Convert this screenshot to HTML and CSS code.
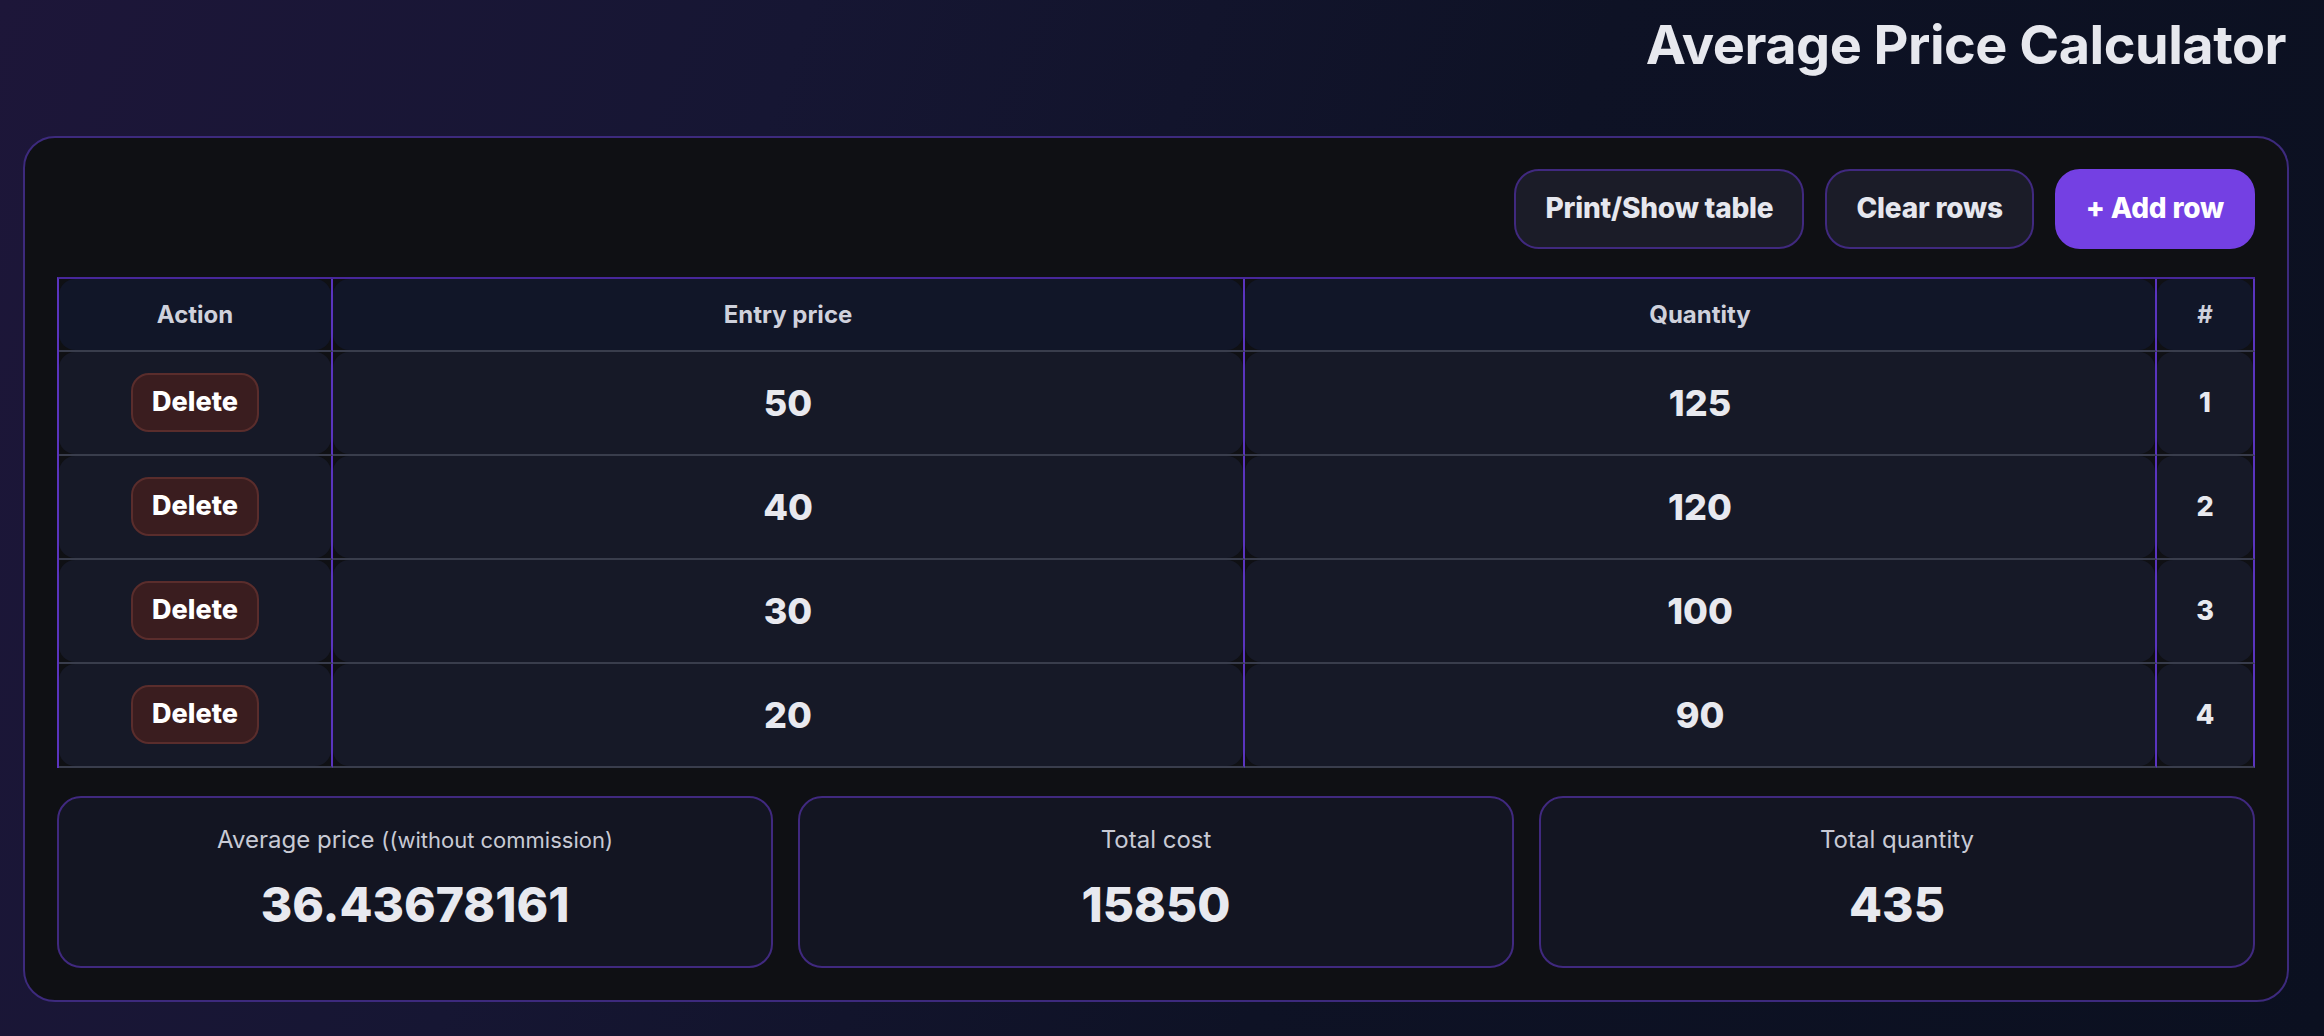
FILE: index.html
```html
<!DOCTYPE html>
<html lang="en">
<head>
<meta charset="utf-8">
<title>Average Price Calculator</title>
<link rel="stylesheet" href="styles.css">
</head>
<body>
<div class="page">
  <h1 class="title">Average Price Calculator</h1>
  <main class="panel">
    <div class="toolbar">
      <button class="btn btn-ghost">Print/Show table</button>
      <button class="btn btn-ghost">Clear rows</button>
      <button class="btn btn-primary">+ Add row</button>
    </div>
    <div class="table">
      <div class="cell head"><div class="fill">Action</div></div>
      <div class="cell head"><div class="fill">Entry price</div></div>
      <div class="cell head"><div class="fill">Quantity</div></div>
      <div class="cell head"><div class="fill">#</div></div>

      <div class="cell"><div class="fill"><button class="del">Delete</button></div></div>
      <div class="cell"><div class="fill num">50</div></div>
      <div class="cell"><div class="fill num">125</div></div>
      <div class="cell"><div class="fill idx">1</div></div>

      <div class="cell"><div class="fill"><button class="del">Delete</button></div></div>
      <div class="cell"><div class="fill num">40</div></div>
      <div class="cell"><div class="fill num">120</div></div>
      <div class="cell"><div class="fill idx">2</div></div>

      <div class="cell"><div class="fill"><button class="del">Delete</button></div></div>
      <div class="cell"><div class="fill num">30</div></div>
      <div class="cell"><div class="fill num">100</div></div>
      <div class="cell"><div class="fill idx">3</div></div>

      <div class="cell"><div class="fill"><button class="del">Delete</button></div></div>
      <div class="cell"><div class="fill num">20</div></div>
      <div class="cell"><div class="fill num">90</div></div>
      <div class="cell"><div class="fill idx">4</div></div>
    </div>
    <div class="stats">
      <div class="stat">
        <div class="label">Average price <span class="small">((without commission)</span></div>
        <div class="value">36.43678161</div>
      </div>
      <div class="stat">
        <div class="label">Total cost</div>
        <div class="value">15850</div>
      </div>
      <div class="stat">
        <div class="label">Total quantity</div>
        <div class="value">435</div>
      </div>
    </div>
  </main>
</div>
</body>
</html>
```

FILE: styles.css
```css
* { box-sizing: border-box; }
html, body { margin: 0; padding: 0; }
body {
  width: 2324px;
  height: 1036px;
  overflow: hidden;
  font-family: Inter, "Noto Sans", "Liberation Sans", sans-serif;
  color: #e6e7ee;
  background: linear-gradient(110deg, #1d1639 0%, #161633 30%, #0e1225 60%, #0b1020 100%);
}
.page {
  padding: 12px 35px 0 23px;
  display: flex;
  flex-direction: column;
}
.title {
  margin: 0 0 59px 0;
  text-align: right;
  font-size: 54px;
  line-height: 65px;
  font-weight: 700;
  letter-spacing: -0.5px;
  color: #e7e8ee;
  padding-right: 3px;
}
.panel {
  background: #0f1014;
  border: 2px solid #3d2a7d;
  border-radius: 32px;
  padding: 31px 32px 32px;
  display: flex;
  flex-direction: column;
  gap: 28px;
}
.toolbar {
  display: flex;
  justify-content: flex-end;
  gap: 21px;
}
.btn {
  font-family: inherit;
  font-size: 28px;
  font-weight: 800;
  line-height: 1.2;
  padding: 21px 29px;
  border-radius: 25px;
  cursor: pointer;
  letter-spacing: -0.2px;
}
.btn-ghost {
  background: #1b1c28;
  border: 2px solid #40297f;
  color: #e6e7ee;
}
.btn-primary {
  background: #7440e3;
  border: 2px solid #7440e3;
  color: #ffffff;
}
.table {
  display: grid;
  grid-template-columns: 274px 1fr 1fr 98px;
  grid-template-rows: 73px repeat(4, 104px);
  border-top: 2px solid #47279a;
  border-left: 2px solid #5a34bf;
  background: #0f1014;
}
.cell {
  border-right: 2px solid #5a34bf;
  border-bottom: 2px solid #393d4c;
  display: flex;
}
.fill {
  flex: 1;
  display: flex;
  align-items: center;
  justify-content: center;
  border-radius: 16px;
  background: #161927;
}
.head .fill {
  background: #111628;
  font-size: 24px;
  font-weight: 700;
  color: #cfd1dc;
}
.num {
  font-size: 36px;
  font-weight: 800;
  color: #e8e9ef;
}
.idx {
  font-size: 27px;
  font-weight: 800;
  color: #e8e9ef;
}
.del {
  font-family: inherit;
  font-size: 27px;
  font-weight: 800;
  line-height: 1.2;
  color: #ffffff;
  background: #3a1d1f;
  border: 2px solid #5a2d2c;
  border-radius: 18px;
  padding: 11px 19px;
  cursor: pointer;
}
.stats {
  display: grid;
  grid-template-columns: repeat(3, 1fr);
  gap: 25px;
}
.stat {
  height: 172px;
  background: #131522;
  border: 2px solid #40297f;
  border-radius: 24px;
  padding: 28px 16px 0;
  display: flex;
  flex-direction: column;
  align-items: center;
  gap: 22px;
}
.label {
  font-size: 24px;
  line-height: 1.2;
  color: #c8cad5;
}
.small {
  font-size: 22px;
}
.value {
  font-size: 48px;
  line-height: 1.2;
  font-weight: 800;
  color: #e8e9ef;
}
```
